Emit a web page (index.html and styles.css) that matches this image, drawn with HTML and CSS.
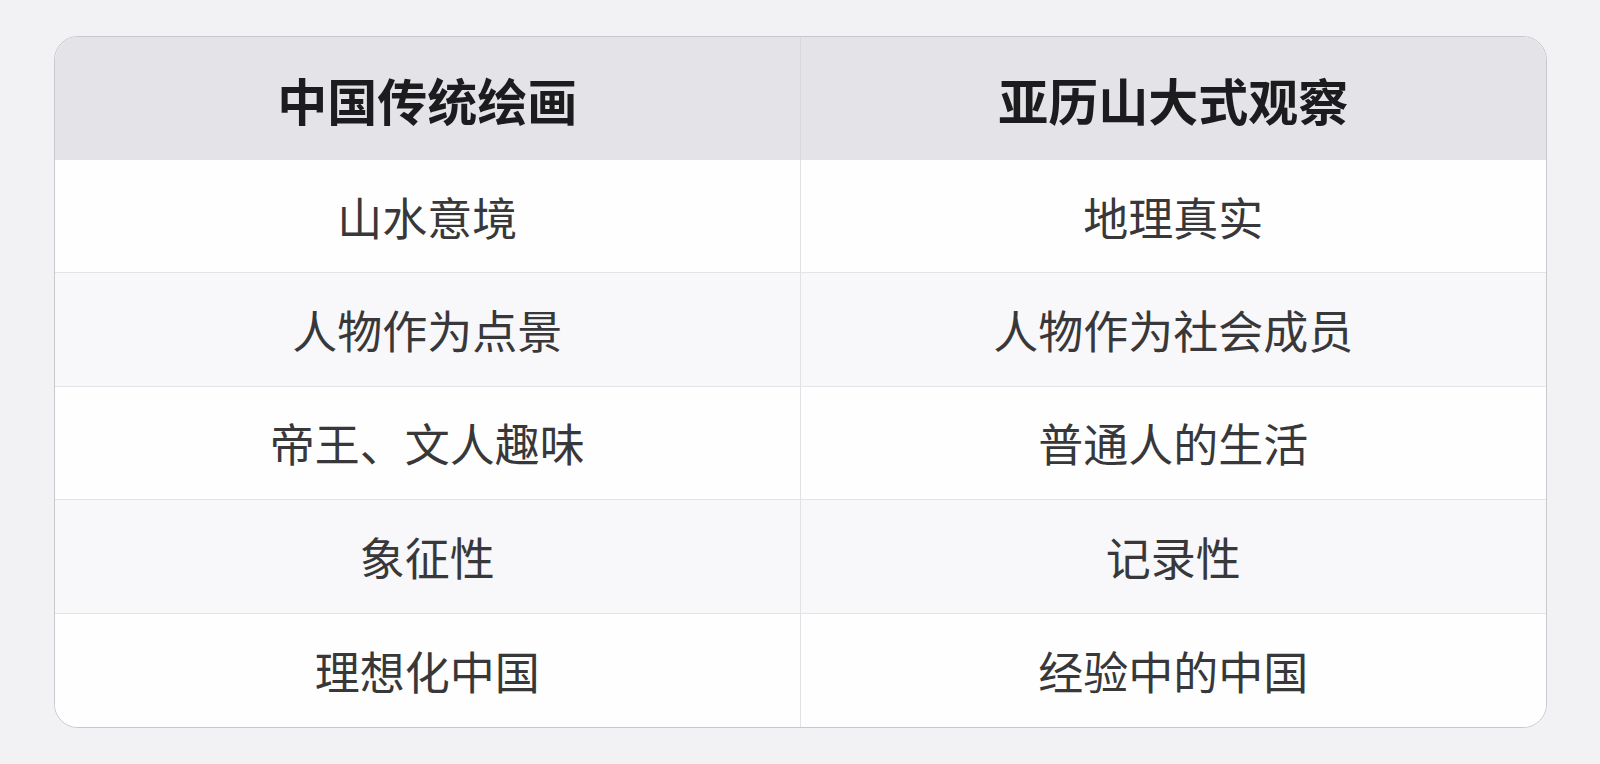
FILE: index.html
```html
<!DOCTYPE html>
<html lang="zh-CN">
<head>
<meta charset="utf-8">
<title>对比</title>
<link rel="stylesheet" href="styles.css">
</head>
<body>
<div class="table">
  <div class="cell head">中国传统绘画</div>
  <div class="cell head right">亚历山大式观察</div>
  <div class="cell odd">山水意境</div>
  <div class="cell odd right">地理真实</div>
  <div class="cell even">人物作为点景</div>
  <div class="cell even right">人物作为社会成员</div>
  <div class="cell odd">帝王、文人趣味</div>
  <div class="cell odd right">普通人的生活</div>
  <div class="cell even">象征性</div>
  <div class="cell even right">记录性</div>
  <div class="cell odd last">理想化中国</div>
  <div class="cell odd right last">经验中的中国</div>
</div>
</body>
</html>
```
FILE: styles.css
```css
html, body {
  margin: 0;
  padding: 0;
  background: #f2f1f4;
  width: 1600px;
  height: 764px;
  overflow: hidden;
}
body {
  padding: 36px 53px 0 54px;
  box-sizing: border-box;
  font-family: "Noto Sans CJK SC", "Noto Sans", sans-serif;
}
.table {
  height: 692px;
  box-sizing: border-box;
  border: 1px solid #c9c8cc;
  border-radius: 24px;
  overflow: hidden;
  display: grid;
  grid-template-columns: 1fr 1fr;
  grid-template-rows: 123px repeat(5, 1fr);
  background: #fefefe;
}
.cell {
  display: flex;
  align-items: center;
  justify-content: center;
  font-size: 45px;
  color: #38383a;
  border-bottom: 1px solid #e4e3e7;
  border-right: 1px solid #e2e1e5;
}
.cell.right {
  border-right: none;
}
.cell.last {
  border-bottom: none;
}
.head {
  background: #e4e3e7;
  color: #1c1c1e;
  font-weight: 700;
  font-size: 50px;
  border-bottom: none;
  border-right-color: #d9d8dc;
}
.odd {
  background: #fefefe;
}
.even {
  background: #f8f7fa;
}
```
